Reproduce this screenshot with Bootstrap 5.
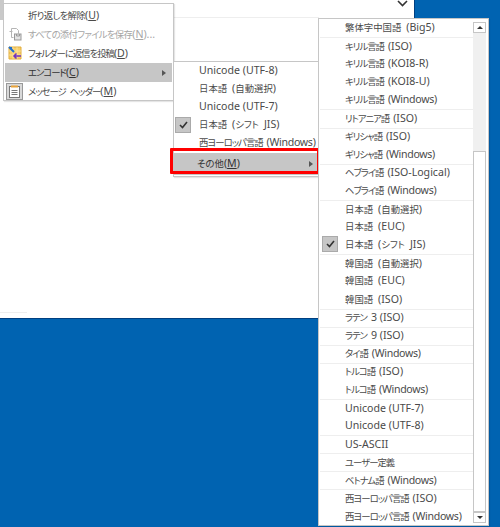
<!DOCTYPE html>
<html lang="ja"><head><meta charset="utf-8">
<link href="https://cdn.jsdelivr.net/npm/bootstrap@5.3.0/dist/css/bootstrap.min.css" rel="stylesheet">
<style>
html,body{height:527px;overflow:hidden}
body{background:#0063b1;font-family:"Noto Sans","Noto Sans CJK JP",sans-serif;font-size:9.4px;color:#4a4a4a;position:relative;font-feature-settings:"palt";letter-spacing:-1px;word-spacing:2.5px}
.lat{font-size:10.6px;letter-spacing:0;word-spacing:0}
.lat.wn{letter-spacing:-.3px}
.nm{letter-spacing:0}
.wd{letter-spacing:-.7px}
.mail-win{width:415px;height:319px;background:#fff;border-bottom:1px solid #003f80;border-right:1px solid #003f80;position:relative}
.win-tab{position:absolute;left:0;top:0;width:4px;height:20px;background:#c9c9c9}
.win-line{position:absolute;left:0;top:312px;width:27px;height:1px;background:#eee}
.win-line2{position:absolute;left:174px;top:17px;width:145px;height:1px;background:#eee}
.win-chev{position:absolute;left:397px;top:0;width:11px;height:7px}
.pop{position:absolute;background:#fff;border:1px solid #c6c6c6;box-shadow:1px 1px 1px rgba(0,0,0,.1)}
.pop-a{left:3px;top:3px;width:171px;height:98px;padding-top:2px}
.pop-b{left:173px;top:61px;width:147px;height:116px}
.pop-c{left:318px;top:18px;width:171px;height:508px;padding:0 14px 0 1px}
.itm{display:flex;align-items:center;position:relative;white-space:pre}
.pop-a .itm{height:19px;padding-left:24px}
.pop-b .itm{height:18px;padding-left:25px}
.pop-c .itm{height:18.1px;padding-left:25px}
.itm.off{color:#a6a6a6}
.itm.on{background:#c6c6c6;color:#333}
.pop-a .itm.on{margin:0 1px;padding-left:23px}
.pop-b .itm.on{margin:1px 0 0 -1px;padding-left:24px;height:22px}
.itm u{text-underline-offset:1px}
.arr{position:absolute;right:6px;top:50%;margin-top:-3px;width:0;height:0;border-left:4px solid #555;border-top:3px solid transparent;border-bottom:3px solid transparent}
.pop-c .itm.sep{border-top:1px solid #eee}
.tick{position:absolute;left:1px;top:1px;width:16px;height:16px;background:#c6c6c6;border:1px solid #aaa;display:flex;align-items:center;justify-content:center}
.pop-c .tick{left:2px;top:0}
.ico{position:absolute;left:4px;top:2px;width:14px;height:14px}
.ico-box{left:2px;top:1px;width:17px;height:17px;background:#d9d9d9;border:1px solid #999;display:flex;align-items:center;justify-content:center}
.red-frame{position:absolute;left:170px;top:148px;width:150px;height:26px;border:3px solid #f00;border-radius:1px;pointer-events:none}
.sbar{position:absolute;right:2px;top:3px;bottom:2px;width:13px;background:#f0f0f0;display:flex;flex-direction:column}
.sbtn{height:11px;flex:none;background:#fff;border:1px solid #c6c6c6;display:flex;align-items:center;justify-content:center}
.sthumb{margin-top:118px;flex:1;background:#fff;border:1px solid #c6c6c6}
.up{width:0;height:0;border:3px solid transparent;border-top:0;border-bottom:3px solid #333}
.dn{width:0;height:0;border:3px solid transparent;border-bottom:0;border-top:3px solid #333}
</style></head><body>
<div class="mail-win">
<div class="win-tab"></div><div class="win-line"></div><div class="win-line2"></div>
<svg class="win-chev" viewBox="0 0 11 7"><path d="M1 1l4.500 4.500L10 1" fill="none" stroke="#333" stroke-width="1.600"/></svg>
</div>

<div class="pop pop-a">
<div class="itm"><span class="wd">折り返しを解除<span class="lat">(<u>U</u>)</span></span></div>
<div class="itm off"><svg class="ico" viewBox="0 0 14 14"><path d="M1.500 4.500h3M3.500 1.500h5l2 2v3M3.500 1.500v9h2" fill="none" stroke="#b5b5b5"/><rect x="6.500" y="7" width="6.500" height="6" fill="#e4e4e4" stroke="#999"/><path d="M8.500 7v2h3V7" fill="none" stroke="#999"/></svg><span class="wd">すべての添付ファイルを保存<span class="lat">(<u>N</u>)...</span></span></div>
<div class="itm"><svg class="ico" viewBox="0 0 14 14"><path d="M1 1h12v12H1z" fill="#f7cf6a" stroke="#e2ad3c"/><path d="M1 5h12M1 9h12M5 1v12M9 1v12" stroke="#fbe6ad" stroke-width=".7"/><path d="M1 1l5 5" stroke="#1f6fd0" stroke-width="2"/><path d="M2 1h2v2H2z" fill="#1f6fd0"/><path d="M13 10H6M8.500 7.500L6 10l2.500 2.500" fill="none" stroke="#7030c0" stroke-width="1.500"/></svg><span>フォルダーに返信を投稿<span class="lat">(<u>D</u>)</span></span></div>
<div class="itm on"><span>エンコード<span class="lat">(<u>C</u>)</span></span><span class="arr"></span></div>
<div class="itm"><span class="ico ico-box"><svg width="11" height="13" viewBox="0 0 11 13"><rect x=".5" y="1.500" width="10" height="11" fill="#fdfdfd" stroke="#777"/><path d="M2.500 5.500h6M2.500 7.500h6M2.500 9.500h6" stroke="#777"/><path d="M2 1.500h7" stroke="#e8a33a" stroke-width="2"/></svg></span><span>メッセージ ヘッダー<span class="lat">(<u>M</u>)</span></span></div>
</div>

<div class="pop pop-b">
<div class="itm lat">Unicode (UTF-8)</div>
<div class="itm nm"><span>日本語 <span class="lat">(</span>自動選択<span class="lat">)</span></span></div>
<div class="itm lat">Unicode (UTF-7)</div>
<div class="itm nm"><span class="tick"><svg width="9" height="8" viewBox="0 0 9 8"><path d="M1 4l2.500 2.500L8 1" fill="none" stroke="#333" stroke-width="1.600"/></svg></span><span>日本語 <span class="lat">(</span>シフト <span class="lat">JIS)</span></span></div>
<div class="itm"><span>西ヨーロッパ言語 <span class="lat wn">(Windows)</span></span></div>
<div class="itm on nm"><span>その他<span class="lat">(<u>M</u>)</span></span><span class="arr"></span></div>
</div>
<div class="red-frame"></div>

<div class="pop pop-c">
<div class="itm nm"><span>繁体字中国語 <span class="lat">(Big5)</span></span></div>
<div class="itm sep"><span>キリル言語 <span class="lat">(ISO)</span></span></div>
<div class="itm"><span>キリル言語 <span class="lat">(KOI8-R)</span></span></div>
<div class="itm"><span>キリル言語 <span class="lat">(KOI8-U)</span></span></div>
<div class="itm"><span>キリル言語 <span class="lat wn">(Windows)</span></span></div>
<div class="itm sep"><span>リトアニア語 <span class="lat">(ISO)</span></span></div>
<div class="itm sep"><span>ギリシャ語 <span class="lat">(ISO)</span></span></div>
<div class="itm"><span>ギリシャ語 <span class="lat wn">(Windows)</span></span></div>
<div class="itm sep"><span>ヘブライ語 <span class="lat">(ISO-Logical)</span></span></div>
<div class="itm"><span>ヘブライ語 <span class="lat wn">(Windows)</span></span></div>
<div class="itm sep nm"><span>日本語 <span class="lat">(</span>自動選択<span class="lat">)</span></span></div>
<div class="itm nm"><span>日本語 <span class="lat">(EUC)</span></span></div>
<div class="itm nm"><span class="tick"><svg width="9" height="8" viewBox="0 0 9 8"><path d="M1 4l2.500 2.500L8 1" fill="none" stroke="#333" stroke-width="1.600"/></svg></span><span>日本語 <span class="lat">(</span>シフト <span class="lat">JIS)</span></span></div>
<div class="itm sep nm"><span>韓国語 <span class="lat">(</span>自動選択<span class="lat">)</span></span></div>
<div class="itm nm"><span>韓国語 <span class="lat">(EUC)</span></span></div>
<div class="itm nm"><span>韓国語 <span class="lat">(ISO)</span></span></div>
<div class="itm sep"><span>ラテン <span class="lat">3 (ISO)</span></span></div>
<div class="itm sep"><span>ラテン <span class="lat">9 (ISO)</span></span></div>
<div class="itm sep"><span>タイ語 <span class="lat wn">(Windows)</span></span></div>
<div class="itm sep"><span>トルコ語 <span class="lat">(ISO)</span></span></div>
<div class="itm"><span>トルコ語 <span class="lat wn">(Windows)</span></span></div>
<div class="itm sep lat">Unicode (UTF-7)</div>
<div class="itm lat">Unicode (UTF-8)</div>
<div class="itm sep lat">US-ASCII</div>
<div class="itm sep">ユーザー定義</div>
<div class="itm sep"><span>ベトナム語 <span class="lat wn">(Windows)</span></span></div>
<div class="itm sep"><span>西ヨーロッパ言語 <span class="lat">(ISO)</span></span></div>
<div class="itm"><span>西ヨーロッパ言語 <span class="lat wn">(Windows)</span></span></div>
<div class="sbar"><div class="sbtn"><span class="up"></span></div><div class="sthumb"></div><div class="sbtn"><span class="dn"></span></div></div>
</div>
<script src="https://cdn.jsdelivr.net/npm/bootstrap@5.3.0/dist/js/bootstrap.bundle.min.js"></script>
</body></html>
